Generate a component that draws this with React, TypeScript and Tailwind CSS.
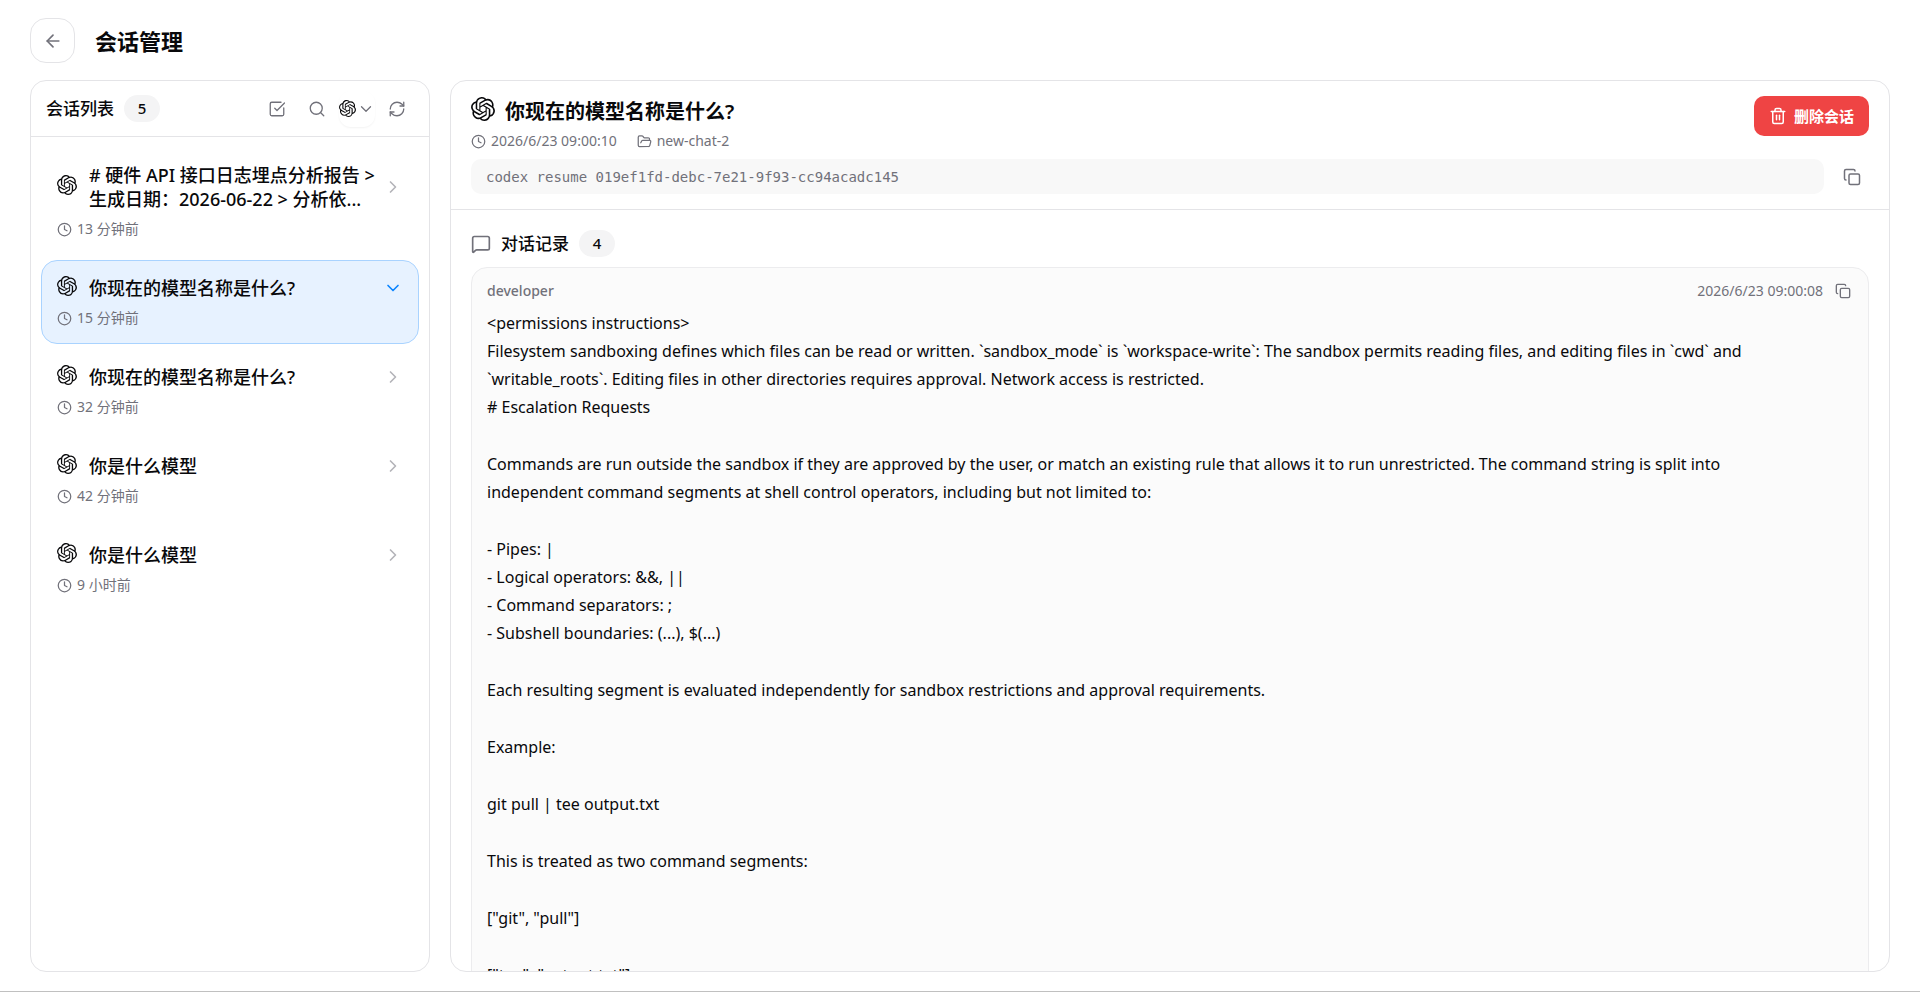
import {
  ArrowLeft,
  ChevronDown,
  ChevronRight,
  Clock,
  Copy,
  FolderOpen,
  MessageSquare,
  RefreshCw,
  Search,
  SquareCheckBig,
  Trash2,
} from "lucide-react";
import { useState } from "react";
import { SiOpenai } from "react-icons/si";

interface Session {
  id: string;
  title: string;
  lastActive: string;
}

const sessions: Session[] = [
  {
    id: "s1",
    title: "# 硬件 API 接口日志埋点分析报告 > 生成日期：2026-06-22 > 分析依...",
    lastActive: "13 分钟前",
  },
  { id: "s2", title: "你现在的模型名称是什么?", lastActive: "15 分钟前" },
  { id: "s3", title: "你现在的模型名称是什么?", lastActive: "32 分钟前" },
  { id: "s4", title: "你是什么模型", lastActive: "42 分钟前" },
  { id: "s5", title: "你是什么模型", lastActive: "9 小时前" },
];

// Each entry is one block; blocks are separated by a blank line
const messageBlocks = [
  "<permissions instructions>\nFilesystem sandboxing defines which files can be read or written. `sandbox_mode` is `workspace-write`: The sandbox permits reading files, and editing files in `cwd` and `writable_roots`. Editing files in other directories requires approval. Network access is restricted.\n# Escalation Requests",
  "Commands are run outside the sandbox if they are approved by the user, or match an existing rule that allows it to run unrestricted. The command string is split into independent command segments at shell control operators, including but not limited to:",
  "- Pipes: |\n- Logical operators: &&, ||\n- Command separators: ;\n- Subshell boundaries: (...), $(...)",
  "Each resulting segment is evaluated independently for sandbox restrictions and approval requirements.",
  "Example:",
  "git pull | tee output.txt",
  "This is treated as two command segments:",
  '["git", "pull"]',
  '["tee", "output.txt"]',
];

function CountBadge({ value }: { value: number }) {
  return (
    <span className="flex h-[27px] w-9 items-center justify-center rounded-full bg-[#f4f4f5] text-[15px] font-medium">
      {value}
    </span>
  );
}

function SessionItem({
  session,
  selected,
  onSelect,
}: {
  session: Session;
  selected: boolean;
  onSelect: () => void;
}) {
  return (
    <button
      type="button"
      onClick={onSelect}
      className={`w-full rounded-2xl border p-[15px] text-left ${
        selected ? "border-[#a9d3ff] bg-[#e7f2ff]" : "border-transparent"
      }`}
    >
      <div className="flex items-center">
        <SiOpenai size={20} className="mr-3 mb-1 shrink-0" />
        <span className="line-clamp-2 flex-1 text-lg leading-6 font-medium">
          {session.title}
        </span>
        {selected ? (
          <ChevronDown size={20} className="shrink-0 text-[#0a84ff]" />
        ) : (
          <ChevronRight size={20} className="shrink-0 text-[#b4b4b9]" />
        )}
      </div>
      <div className="mt-2 flex items-center gap-[5px] text-sm text-[#71717a]">
        <Clock size={15} />
        <span>{session.lastActive}</span>
      </div>
    </button>
  );
}

export default function App() {
  const [selectedId, setSelectedId] = useState("s2");

  return (
    <div className="flex h-screen flex-col border-b border-[#c0c0c0] bg-white px-[30px] pt-[18px] pb-[19px] font-['Noto_Sans','Noto_Sans_CJK_SC',sans-serif] text-[#09090b]">
      <header className="flex items-center gap-5">
        <button
          type="button"
          aria-label="返回"
          className="flex size-[45px] items-center justify-center rounded-2xl border border-[#e4e4e7]"
        >
          <ArrowLeft size={20} className="text-[#71717a]" />
        </button>
        <h1 className="text-[22px] leading-8 font-bold">会话管理</h1>
      </header>

      <main className="mt-[17px] flex min-h-0 flex-1 gap-5">
        <aside className="flex w-[400px] shrink-0 flex-col overflow-hidden rounded-2xl border border-[#e4e4e7]">
          <div className="flex h-14 shrink-0 items-center justify-between border-b border-[#e4e4e7] pr-5 pl-[15px]">
            <div className="flex items-center gap-[10px]">
              <h2 className="text-[17px] leading-7 font-medium">会话列表</h2>
              <CountBadge value={5} />
            </div>
            <div className="flex items-center text-[#71717a]">
              <button type="button" aria-label="批量选择" className="flex w-10 justify-center">
                <SquareCheckBig size={18} strokeWidth={1.75} />
              </button>
              <button type="button" aria-label="搜索" className="flex w-10 justify-center">
                <Search size={18} strokeWidth={1.75} />
              </button>
              <button
                type="button"
                aria-label="筛选应用"
                className="ml-0.5 flex size-9 items-center justify-between rounded-xl shadow-xs"
              >
                <SiOpenai size={17} className="text-[#09090b]" />
                <ChevronDown size={18} strokeWidth={1.75} />
              </button>
              <button type="button" aria-label="刷新" className="ml-[10px] flex w-6 justify-center">
                <RefreshCw size={18} strokeWidth={1.75} />
              </button>
            </div>
          </div>
          <div className="flex flex-col gap-[5px] overflow-hidden p-[10px]">
            {sessions.map((session) => (
              <SessionItem
                key={session.id}
                session={session}
                selected={session.id === selectedId}
                onSelect={() => setSelectedId(session.id)}
              />
            ))}
          </div>
        </aside>

        <section className="flex min-w-0 flex-1 flex-col overflow-hidden rounded-2xl border border-[#e4e4e7]">
          <div className="border-b border-[#e4e4e7] px-5 py-[15px]">
            <div className="flex items-start justify-between">
              <div>
                <div className="flex items-center">
                  <SiOpenai size={24} className="mr-[10px] mb-1.5" />
                  <h2 className="text-[20px] leading-8 font-semibold">你现在的模型名称是什么?</h2>
                </div>
                <div className="mt-[3px] flex items-center gap-5 text-sm text-[#71717a]">
                  <span className="flex items-center gap-[5px]">
                    <Clock size={15} />
                    2026/6/23 09:00:10
                  </span>
                  <span className="flex items-center gap-[5px]">
                    <FolderOpen size={15} />
                    new-chat-2
                  </span>
                </div>
              </div>
              <button
                type="button"
                className="flex h-10 items-center gap-[7px] rounded-[10px] bg-[#ef4444] px-[15px] text-[15px] font-bold text-white"
              >
                <Trash2 size={18} />
                删除会话
              </button>
            </div>
            <div className="mt-2 flex items-center gap-[10px]">
              <code className="flex h-[35px] flex-1 items-center rounded-[10px] bg-[#f8f8f8] px-[15px] font-['DejaVu_Sans_Mono',monospace] text-sm text-[#71717a]">
                codex resume 019ef1fd-debc-7e21-9f93-cc94acadc145
              </code>
              <button
                type="button"
                aria-label="复制命令"
                className="flex size-[35px] items-center justify-center text-[#71717a]"
              >
                <Copy size={18} />
              </button>
            </div>
          </div>

          <div className="min-h-0 flex-1 overflow-hidden px-5 pt-5">
            <div className="flex items-center gap-[10px]">
              <MessageSquare size={20} className="text-[#71717a]" />
              <h3 className="text-[17px] leading-[27px] font-medium">对话记录</h3>
              <CountBadge value={4} />
            </div>
            <article className="mt-[10px] rounded-2xl border border-[#ececee] bg-[#fbfbfb] px-[15px] py-[13px]">
              <div className="flex items-center justify-between pr-0.5 text-sm text-[#71717a]">
                <span className="font-medium">developer</span>
                <div className="flex items-center gap-3">
                  <time>2026/6/23 09:00:08</time>
                  <button type="button" aria-label="复制消息">
                    <Copy size={16} />
                  </button>
                </div>
              </div>
              <div className="mt-2 flex flex-col gap-[29px] pr-10 text-base leading-7 whitespace-pre-wrap">
                {messageBlocks.map((block) => (
                  <p key={block}>{block}</p>
                ))}
              </div>
            </article>
          </div>
        </section>
      </main>
    </div>
  );
}
